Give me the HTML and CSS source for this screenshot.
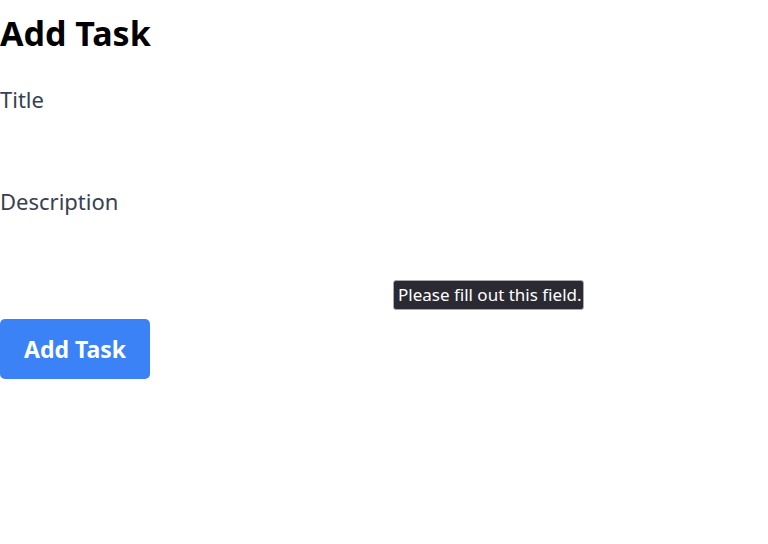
FILE: index.html
```html
<!DOCTYPE html>
<html lang="en">
<head>
<meta charset="utf-8">
<title>Add Task</title>
<link rel="stylesheet" href="styles.css">
</head>
<body>
<main class="page">
  <h1 class="heading">Add Task</h1>
  <form class="task-form">
    <div class="field">
      <label class="field-label" for="title">Title</label>
      <input class="field-input" id="title" type="text" required>
    </div>
    <div class="field">
      <label class="field-label" for="description">Description</label>
      <textarea class="field-input field-textarea" id="description" required></textarea>
    </div>
    <button class="submit" type="submit">Add Task</button>
  </form>
  <div class="tooltip">Please fill out this field.</div>
</main>
</body>
</html>
```
FILE: styles.css
```css
html, body {
  margin: 0;
  padding: 0;
  background: #ffffff;
}
body {
  font-family: "Noto Sans", "Open Sans", "DejaVu Sans", sans-serif;
}
.page {
  position: relative;
  width: 768px;
  height: 544px;
}
.heading {
  margin: 0 0 17px;
  font-size: 34px;
  line-height: 66px;
  font-weight: 700;
  color: #000000;
}
.task-form {
  display: flex;
  flex-direction: column;
}
.field {
  display: flex;
  flex-direction: column;
  height: 102px;
}
.field-label {
  font-size: 22px;
  line-height: 32px;
  color: #374151;
}
.field-input {
  border: none;
  outline: none;
  background: transparent;
  padding: 0;
  height: 40px;
  font: inherit;
}
.field-textarea {
  resize: none;
}
.submit {
  align-self: flex-start;
  margin-top: 32px;
  width: 150px;
  height: 60px;
  border: none;
  border-radius: 5px;
  background: #3b82f6;
  color: #ffffff;
  font-family: inherit;
  font-size: 23px;
  font-weight: 700;
  padding: 0;
}
.tooltip {
  position: absolute;
  left: 393px;
  top: 280px;
  width: 191px;
  height: 30px;
  box-sizing: border-box;
  border-radius: 3px;
  background: #2b2a33;
  border: 1px solid #a9a9b3;
  color: #ffffff;
  font-size: 17px;
  line-height: 28px;
  padding: 0 4px;
  white-space: nowrap;
}
```
